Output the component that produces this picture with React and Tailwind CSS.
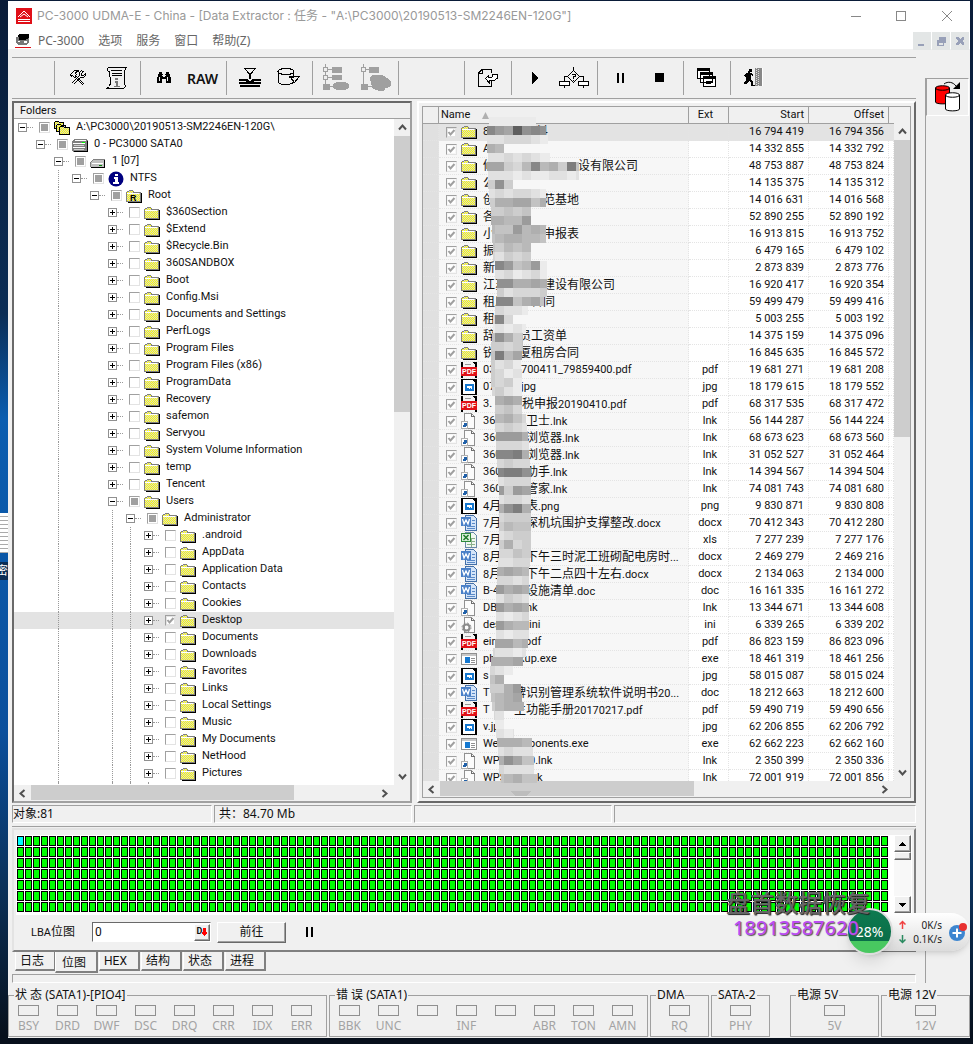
import { useState } from "react";

const TREE = [
  { level: 0, name: "A:\\PC3000\\20190513-SM2246EN-120G\\", icon: "stack", open: true, state: "some" },
  { level: 1, name: "0 - PC3000 SATA0", icon: "drive", open: true, state: "some" },
  { level: 2, name: "1 [07]", icon: "disk", open: true, state: "some" },
  { level: 3, name: "NTFS", icon: "info", open: true, state: "some" },
  { level: 4, name: "Root", icon: "root", open: true, state: "some" },
  ...[
    "$360Section", "$Extend", "$Recycle.Bin", "360SANDBOX", "Boot", "Config.Msi",
    "Documents and Settings", "PerfLogs", "Program Files", "Program Files (x86)",
    "ProgramData", "Recovery", "safemon", "Servyou", "System Volume Information",
    "temp", "Tencent",
  ].map((name) => ({ level: 5, name, icon: "folder" })),
  { level: 5, name: "Users", icon: "folder", open: true, state: "some" },
  { level: 6, name: "Administrator", icon: "folder", open: true, state: "some" },
  ...[
    ".android", "AppData", "Application Data", "Contacts", "Cookies", "Desktop",
    "Documents", "Downloads", "Favorites", "Links", "Local Settings", "Music",
    "My Documents", "NetHood", "Pictures",
  ].map((name) => ({ level: 7, name, icon: "folder", state: name === "Desktop" ? "all" : "none" })),
];

// head, width taken by head and the hidden part, tail, extension, start sector, icon
const FILES = [
  ["8", 53, "料", "", 16794419, "folder"],
  ["A", 0, "", "", 14332855, "folder"],
  ["修", 95, "设有限公司", "", 48753887, "folder"],
  ["公", 0, "", "", 14135375, "folder"],
  ["创", 60, "范基地", "", 14016631, "folder"],
  ["各", 0, "", "", 52890255, "folder"],
  ["小", 60, "申报表", "", 16913815, "folder"],
  ["振", 0, "", "", 6479165, "folder"],
  ["新建", 0, "", "", 2873839, "folder"],
  ["江苏", 60, "建设有限公司", "", 16920417, "folder"],
  ["租房", 48, "合同", "", 59499479, "folder"],
  ["租", 0, "", "", 5003255, "folder"],
  ["辞", 36, "员工资单", "", 14375159, "folder"],
  ["锐", 36, "厦租房合同", "", 16845635, "folder"],
  ["03", 38, "700411_79859400.pdf", "pdf", 19681271, "pdf"],
  ["07", 38, "jpg", "jpg", 18179615, "image"],
  ["3.", 39, "税申报20190410.pdf", "pdf", 68317535, "pdf"],
  ["360", 43, "卫士.lnk", "lnk", 56144287, "link"],
  ["360", 43, "浏览器.lnk", "lnk", 68673623, "link"],
  ["360", 43, "浏览器.lnk", "lnk", 31052527, "link"],
  ["360", 43, "助手.lnk", "lnk", 14394567, "link"],
  ["360", 43, "管家.lnk", "lnk", 74081743, "link"],
  ["4月", 43, "表.png", "png", 9830871, "image"],
  ["7月", 43, "深机坑围护支撑整改.docx", "docx", 70412343, "word"],
  ["7月", 0, "", "xls", 7277239, "excel"],
  ["8月", 43, "下午三时泥工班砌配电房时...", "docx", 2469279, "word"],
  ["8月", 43, "下午二点四十左右.docx", "docx", 2134063, "word"],
  ["B-4", 43, "设施清单.doc", "doc", 16161335, "word"],
  ["DB", 43, "nk", "lnk", 13344671, "link"],
  ["des", 46, "ini", "ini", 6339265, "gear"],
  ["ein", 42, "pdf", "pdf", 86823159, "pdf"],
  ["ph", 36, "kup.exe", "exe", 18461319, "exe"],
  ["s", 0, "", "jpg", 58015087, "image"],
  ["T", 31, "牌识别管理系统软件说明书20...", "doc", 18212663, "word"],
  ["T", 31, "主功能手册20170217.pdf", "pdf", 59490719, "pdf"],
  ["v.jp", 0, "", "jpg", 62206855, "image"],
  ["Web", 46, "ponents.exe", "exe", 62662223, "exe"],
  ["WPS", 46, "0.lnk", "lnk", 2350399, "link"],
  ["WPS", 54, "k", "lnk", 72001919, "link"],
];

// left edge, right edge, one hex shade for each 9px block
const MASK = [
  [3, 50, "eeeeeee"], [1, 60, "4670545"], [1, 62, "ddcccde"], [1, 18, "89"],
  [2, 64, "ddcdcdee"], [1, 93, "77bc9498b3a"], [2, 93, "dddedeedded"], [2, 27, "b5b"],
  [3, 60, "dcdccde"], [4, 60, "b8877a8"], [5, 45, "bbaba"], [5, 45, "88996"],
  [6, 60, "9aa6989"], [6, 60, "a98899a"], [7, 45, "ab9a9"], [7, 45, "cdbcb"],
  [9, 61, "c46a96e"], [9, 61, "cdcedce"], [11, 61, "a5588785"], [11, 61, "cbdcccb"],
  [10, 58, "744a87a"], [9, 42, "dcdde"], [7, 27, "c4c"], [7, 40, "edede"],
  [6, 37, "a58ba"], [5, 37, "bbcba"], [5, 36, "a397"], [5, 35, "bdce"],
  [5, 36, "bced"], [5, 36, "bcbe"], [6, 37, "cbde"], [9, 38, "8878"],
  [9, 38, "abac"], [9, 40, "a98ac"], [9, 41, "bcbcd"], [10, 42, "76668"],
  [10, 43, "bcccd"], [10, 43, "644387"], [11, 44, "bcbcc"], [12, 45, "54335"],
  [12, 45, "cdccc"], [13, 45, "66b67"], [13, 45, "bdccd"], [13, 45, "68538"],
  [13, 45, "bcbbb"], [13, 45, "ab9aa"], [13, 45, "bdcbb"], [13, 45, "bb8cb"],
  [13, 45, "cccab"], [12, 44, "cddcc"], [11, 43, "88789"], [11, 43, "bccdc"],
  [10, 43, "668788"], [10, 43, "cdbcd"], [10, 43, "668788"], [10, 43, "bdedc"],
  [10, 43, "768996"], [10, 43, "bdedd"], [9, 42, "87798"], [7, 40, "cdded"],
  [5, 37, "88877"], [4, 27, "cde"], [4, 20, "a8"], [4, 35, "bb86"],
  [5, 36, "a9877"], [6, 38, "b9888"], [8, 22, "cd"], [9, 22, "de"],
  [10, 28, "cded"], [11, 46, "988899"], [12, 47, "bdcddd"], [13, 48, "a857aa"],
  [13, 48, "bcdddd"], [15, 51, "aa98aa"],
];

const CJK = /([\u3000-\u9fff\uff00-\uffef]+)/;

function Text({ children }) {
  return children.split(CJK).map((part, i) =>
    i % 2 ? <span key={i} className="text-[12px]">{part}</span> : part
  );
}

function formatNumber(n) {
  return String(n).replace(/\B(?=(\d{3})+$)/g, " ");
}

function Svg({ w = 16, h = 16, children }) {
  return (
    <svg width={w} height={h} viewBox={`0 0 ${w} ${h}`} className="block shrink-0" shapeRendering="crispEdges" aria-hidden="true">
      {children}
    </svg>
  );
}

function FolderShape() {
  return (
    <>
      <path d="M1 14h14V5h1v10H2v-1z" />
      <path d="M.5 13.5v-9l1-1h1l1-1h3l1 1v1h7v9z" fill="url(#dither)" stroke="#808080" />
      <path d="M1 5.5h12" stroke="#fff" />
    </>
  );
}

function ItemIcon({ name }) {
  switch (name) {
    case "folder":
      return <Svg><FolderShape /></Svg>;
    case "root":
      return (
        <Svg>
          <FolderShape />
          <text x="4" y="13" fontSize="9" fontWeight="bold" fontFamily="Liberation Sans, sans-serif">R</text>
        </Svg>
      );
    case "stack":
      return (
        <Svg>
          <path d="M.5 8.500v-6l1-1h3l1 1h4v7z" fill="url(#dither)" stroke="#000" />
          <path d="M2.500 11.500v-6l1-1h3l1 1h4v7z" fill="url(#dither)" stroke="#000" />
          <path d="M5.500 14.500v-7l1-1h3l1 1h5v7z" fill="url(#dither)" stroke="#000" />
        </Svg>
      );
    case "drive":
      return (
        <Svg>
          <path d="M2 2h12l2 2v9l-2 2H1l-1-2V4z" fill="#808080" />
          <path d="M3 3h11M1 6h12M1 10h12" stroke="#fff" />
          <path d="M2 8h10M2 12h10" stroke="#d0d0d0" />
          <path d="M15 4v10H2" fill="none" stroke="#000" />
          <path d="M10 5h3v1h-3z" fill="#00ff00" />
        </Svg>
      );
    case "disk":
      return (
        <Svg>
          <path d="M3 5h11l1 2v6H1V8z" fill="#c0c0c0" />
          <path d="M.5 12.500v-4l3-3h11" fill="none" stroke="#808080" />
          <path d="M2 9.500h11" stroke="#fff" />
          <path d="M1 13.500h13.500V6" fill="none" stroke="#000" />
          <path d="M9 11h3v1H9z" fill="#008000" />
        </Svg>
      );
    case "info":
      return (
        <Svg>
          <circle cx="8" cy="8" r="7.500" fill="#000080" shapeRendering="auto" />
          <path d="M7 3h3v2H7zM6 6h4v5h1v2H5v-2h2V8H6z" fill="#fff" />
        </Svg>
      );
    case "pdf":
      return (
        <Svg>
          <path d="M0 0h16v16H0z" />
          <path d="M2 0h10l2 3v13H2z" fill="#f4f4f4" />
          <path d="M4 2h6" stroke="#999" />
          <path d="M0 5h16v9H0z" fill="#e01018" />
          <text x="1" y="12" fontSize="7" fontWeight="bold" fill="#fff" fontFamily="Liberation Sans, sans-serif">PDF</text>
        </Svg>
      );
    case "image":
      return (
        <Svg>
          <path d="M0 0h16v16H0z" />
          <path d="M2 1h10l2 3v11H2z" fill="#fff" />
          <path d="M4 5h9v7H4z" fill="#1578d0" />
          <path d="M6 7h5v3h-1V9H9v1H8V9H6z" fill="#fff" />
        </Svg>
      );
    case "link":
      return (
        <Svg>
          <path d="M3.500.5h7l3 3v12h-10z" fill="#fbfbfb" stroke="#909090" />
          <path d="M10.500.5v3h3" fill="none" stroke="#707070" />
          <path d="M.5 8.500h6v7h-6z" fill="#fff" stroke="#b0b0b0" />
          <path d="M2 14v-2l1-1-1-1h4v4l-1-1-1 1z" fill="#2060a8" />
        </Svg>
      );
    case "word":
      return (
        <Svg>
          <path d="M4.500.5h8l3 3v12h-11z" fill="#d4e4f8" stroke="#4470a8" />
          <path d="M6 11.500h8M6 13.500h8M11 5.500h3M11 8.500h3" stroke="#5a8ac8" />
          <path d="M0 2h10v9H0z" fill="#4a80c8" />
          <path d="M1.500 4l1.500 5 2-4 2 4 1.500-5" fill="none" stroke="#fff" strokeWidth="1.300" shapeRendering="auto" />
        </Svg>
      );
    case "excel":
      return (
        <Svg>
          <path d="M4.500.5h8l3 3v12h-11z" fill="#f0f8f0" stroke="#6888a8" />
          <path d="M6 12.500h8M11 6.500h3M11 9.500h3M10.500 6v9" stroke="#8ab08a" />
          <path d="M.5 1.500h9v8h-9z" fill="#d8f0d8" stroke="#2f8a3a" />
          <path d="M2.500 3l5 5M7.500 3l-5 5" stroke="#1f7a2a" strokeWidth="1.500" shapeRendering="auto" />
        </Svg>
      );
    case "gear":
      return (
        <Svg>
          <path d="M3.500.5h7l3 3v12h-10z" fill="#fbfbfb" stroke="#909090" />
          <path d="M10.500.5v3h3" fill="none" stroke="#707070" />
          <circle cx="5.500" cy="10.500" r="3" fill="none" stroke="#8a8a8a" strokeWidth="2" shapeRendering="auto" />
          <circle cx="5.500" cy="10.500" r="4.500" fill="none" stroke="#8a8a8a" strokeDasharray="1.800 1.730" shapeRendering="auto" />
        </Svg>
      );
    default:
      return (
        <Svg>
          <path d="M.5 2.500h15v11H.5z" fill="#fff" stroke="#909090" />
          <path d="M1 3h14v2H1z" fill="#c8c8c8" />
          <path d="M4 6h5v6H4z" fill="#1578d0" />
          <path d="M10 7.500h4M10 9.500h4M10 11.500h4" stroke="#909090" />
        </Svg>
      );
  }
}

function CheckBox({ label, state = "none" }) {
  const [checked, setChecked] = useState(state === "all");
  return (
    <span className="relative block h-[11px] w-[11px] shrink-0">
      <input
        type="checkbox"
        aria-label={label}
        checked={checked}
        onChange={() => setChecked(!checked)}
        className={
          "block h-[11px] w-[11px] appearance-none border border-[#e3e3e3] border-t-[#a0a0a0] border-l-[#a0a0a0] bg-clip-content p-px " +
          (state === "some" ? "bg-[#a0a0a0]" : "bg-white")
        }
      />
      {checked && (
        <svg width="11" height="11" viewBox="0 0 11 11" className="pointer-events-none absolute inset-0">
          <path d="M2.500 5l2 2.500 4-4.500" fill="none" stroke="#a0a0a0" strokeWidth="2" />
        </svg>
      )}
    </span>
  );
}

const GUIDES = [2, 5, 6, 7];

function TreeRow({ node, selected, onSelect }) {
  const { level, name, icon, open, state } = node;
  return (
    <li className={"flex h-[17px] items-center pr-2 " + (selected ? "bg-[#e3e3e3]" : "")} onClick={onSelect}>
      {Array.from({ length: level }, (_, i) => (
        <span key={i} className="flex h-full w-[18px] shrink-0 pl-2">
          {GUIDES.includes(i) && <span className="h-full border-l border-dotted border-[#999]" />}
        </span>
      ))}
      <span className="flex h-full w-[25px] shrink-0 items-center pl-1">
        <button aria-label={(open ? "Collapse " : "Expand ") + name} className="block bg-white">
          <Svg w={9} h={9}>
            <path d="M.5.5h8v8h-8z" fill="#fff" stroke="#909090" />
            <path d={open ? "M2 4.500h5" : "M2 4.500h5M4.500 2v5"} stroke="#000" />
          </Svg>
        </button>
        <span className="w-[6px] border-t border-dotted border-[#999]" />
      </span>
      <CheckBox label={name} state={state} />
      <span className="ml-1"><ItemIcon name={icon} /></span>
      <span className="ml-[6px] whitespace-pre">{name}</span>
    </li>
  );
}

function Chevron({ d }) {
  return (
    <svg width="9" height="9" viewBox="0 0 9 9" aria-hidden="true">
      <path d={d} fill="none" stroke="#505050" strokeWidth="2" />
    </svg>
  );
}

function VScroll({ thumb }) {
  return (
    <div className="flex w-4 shrink-0 flex-col bg-[#f0f0f0]">
      <button aria-label="Scroll up" className="flex h-[17px] items-center justify-center"><Chevron d="M1 6.500l3.500-4 3.500 4" /></button>
      <div className="flex-1"><div className={"bg-[#cdcdcd] " + thumb} /></div>
      <button aria-label="Scroll down" className="flex h-[17px] items-center justify-center"><Chevron d="M1 2.500l3.500 4 3.500-4" /></button>
    </div>
  );
}

function HScroll({ thumb }) {
  return (
    <div className="mr-[17px] flex h-4 shrink-0 bg-[#f0f0f0]">
      <button aria-label="Scroll left" className="flex w-[17px] items-center justify-center"><Chevron d="M6.500 1l-4 3.500 4 3.500" /></button>
      <div className="flex-1"><div className={"h-[15px] bg-[#cdcdcd] " + thumb} /></div>
      <button aria-label="Scroll right" className="flex w-[17px] items-center justify-center"><Chevron d="M2.500 1l4 3.500-4 3.500" /></button>
    </div>
  );
}

function Folders() {
  const [selected, setSelected] = useState("Desktop");
  return (
    <section className="flex w-[400px] shrink-0 flex-col border-2 border-[#a0a0a0] border-t-[#696969] border-l-[#696969] bg-[#f0f0f0]">
      <h2 className="h-4 border-b border-[#a0a0a0] pl-[6px] leading-4">Folders</h2>
      <div className="flex h-[666px] bg-white">
        <ul className="min-w-0 flex-1 overflow-hidden">
          {TREE.map((node) => (
            <TreeRow key={node.level + node.name} node={node} selected={selected === node.name} onSelect={() => setSelected(node.name)} />
          ))}
          <li className="flex h-1">
            <span className="ml-[44px] border-l border-dotted border-[#999]" />
            <span className="ml-[53px] border-l border-dotted border-[#999]" />
            <span className="ml-[17px] border-l border-dotted border-[#999]" />
            <span className="ml-[17px] border-l border-dotted border-[#999]" />
          </li>
        </ul>
        <VScroll thumb="h-[276px]" />
      </div>
      <HScroll thumb="w-[263px]" />
    </section>
  );
}

function Mask() {
  return (
    <svg width="96" height="684" viewBox="0 0 96 684" className="pointer-events-none absolute top-[10px] left-[63px]" shapeRendering="crispEdges" aria-hidden="true">
      {MASK.map(([left, right, shades], row) =>
        shades.split("").map((s, col) => {
          const x = Math.max(left, col * 9);
          const end = Math.min(right, col * 9 + 9);
          const v = 95 + parseInt(s, 16) * 10;
          return end > x ? (
            <rect key={row + "-" + col} x={x} y={row * 9} width={end - x} height="9" fill={`rgb(${v},${v},${v})`} />
          ) : null;
        })
      )}
      <path d="M24 674h22l-6 5H30z" fill="#bdbdbd" />
    </svg>
  );
}

function FileList() {
  const th = "border-r border-b border-[#a0a0a0] p-0 font-normal";
  const td = "border-r border-b border-dotted border-[#e4e4e4] p-0";
  return (
    <section className="min-w-0 flex-1 border-2 border-white border-r-[#696969] border-b-[#696969] p-[3px]">
      <div className="relative border border-[#a0a0a0]">
        <div className="flex h-[674px]">
          <div className="min-w-0 flex-1 overflow-hidden bg-white">
            <table className="w-full table-fixed border-separate border-spacing-0">
              <colgroup>
                <col className="w-4" />
                <col />
                <col className="w-[40px]" />
                <col className="w-[80px]" />
                <col className="w-[80px]" />
                <col className="w-[5px]" />
              </colgroup>
              <thead>
                <tr className="h-4 bg-[#f0f0f0] leading-4">
                  <th className={th} />
                  <th className={th + " pl-[2px] text-left"}>
                    <span className="flex items-center gap-3">
                      Name
                      <Svg w={7} h={7}><path d="M3.500 0L7 7H0z" fill="#b0b0b0" shapeRendering="auto" /></Svg>
                    </span>
                  </th>
                  <th className={th + " pr-[6px] text-center"}>Ext</th>
                  <th className={th + " pr-[4px] text-right"}>Start</th>
                  <th className={th + " pr-[4px] text-right"}>Offset</th>
                  <th className="border-b border-[#a0a0a0]" />
                </tr>
              </thead>
              <tbody>
                {FILES.map(([head, gap, tail, ext, start, icon], i) => (
                  <tr key={start} className={"h-[17px] leading-4 " + (i === 0 ? "bg-[#e3e3e3]" : "")}>
                    <td className={td + " bg-[#e0e0e0]"} />
                    <td className={td + (i === 0 ? "" : " bg-[#f7f7f7]")}>
                      <span className="flex h-4 items-center overflow-hidden pl-[7px] whitespace-nowrap">
                        <CheckBox label={head + tail} state="all" />
                        <span className="ml-1"><ItemIcon name={icon} /></span>
                        <span className="ml-[6px] shrink-0" style={{ width: gap || undefined }}><Text>{head}</Text></span>
                        <span><Text>{tail}</Text></span>
                      </span>
                    </td>
                    <td className={td + " pl-[3px] text-center"}>{ext}</td>
                    <td className={td + " pr-1 text-right"}>{formatNumber(start)}</td>
                    <td className={td + " pr-1 text-right"}>{formatNumber(start - 63)}</td>
                    <td className={td} />
                  </tr>
                ))}
              </tbody>
            </table>
          </div>
          <div className="flex bg-[#f0f0f0] pt-4"><VScroll thumb="h-[297px]" /></div>
        </div>
        <HScroll thumb="w-[254px]" />
        <Mask />
      </div>
    </section>
  );
}

const TOOLS = {
  tools: [18, 18, <g key="t" fill="none" stroke="#000"><path d="M2.500 14.500l8-8M4.500 15.500l7-7M10.500 6.500v-3l2-2M11.500 8.500h3l2-2v-2l-2 2h-2v-2l2-2h-2" /><path d="M7.500 7.500l8 8M6.500 8.500l8 8M1.500 5.500l4-4h4v1h-2l-1 2 1 1-2 3-2-2-1 1z" /></g>],
  script: [24, 24, <g key="s" fill="none" stroke="#000"><path d="M4.500 1.500h17l-2 3v12l1 5M4.500 1.500c-3 0-3 4 0 4l1 11-1 4-3 2h16c3 0 3-3 3-4" /><path d="M6 4.500h11M7 7.500h10M7 9.500h10" /><path d="M10 12h3v2h-3zM10 15h3v5h2v1H9v-1h2v-3h-1z" fill="#777" stroke="none" /></g>],
  find: [18, 18, <g key="f"><path d="M4 3h3v2h1v3h2V5h1V3h3v2h1v3h1v6h-5v-4H7v4H2V8h1V5h1z" /><path d="M4.500 8v4M12.500 8v4M7 6.500h4" stroke="#eee" /></g>],
  merge: [24, 22, <g key="m"><path d="M6.500 1.500h11l-5.500 6z" fill="none" stroke="#000" /><path d="M1 12h8l3 2 3-2h8v2h-7v1h7v2H1v-2h7v-1H1zM2 18h20v2H2zM11 8h2v4h-2z" /></g>],
  save: [24, 22, <g key="v" fill="none" stroke="#000"><ellipse cx="9" cy="4.500" rx="8" ry="3" /><path d="M1.500 4v11c0 3 12 4 15 0M16.500 5v4M16.500 10.500h-4v-1h10l-5 6-4-5z" /></g>],
  map1: [28, 28, <g key="a" fill="#a0a0a0" stroke="#a0a0a0"><path d="M3.500 0v20M6 5.500h5M6 13.500h5M5 22.500h7" /><path d="M1.500 3.500h4v4h-4zM1.500 11.500h4v4h-4z" fill="#eee" /><path d="M10 3h9v5h-9zM10 11h9v4h-9zM1 20h6v5H1z" /><ellipse cx="19" cy="22" rx="8" ry="4" /></g>],
  map2: [32, 28, <g key="b" fill="#a0a0a0" stroke="#a0a0a0"><path d="M4.500 0v20M6 5.500h6M5 22.500h9" /><path d="M2.500 3.500h4v4h-4z" fill="#eee" /><path d="M10 3h9v5h-9zM2 20h6v5H2zM11 14l4-3h8l4 3 4 3v5l-5 2-2 3-5-1-5-2z" /></g>],
  export: [22, 22, <g key="e" fill="none" stroke="#000"><path d="M14.500 14v5.500h-13V6l3.500-3.500h9.500V6M1.500 6.500H5V3" /><path d="M8.500 11.500l3-3v2c3 1 5-1 4-3h4.500v4c-2 2-5 3-8 2v2z" fill="#fff" /></g>],
  play: [10, 12, <path key="p" d="M2 0l6 6-6 6z" />],
  flow: [32, 24, <g key="w" fill="none" stroke="#000"><path d="M15.500 1v4M15.500 4.500l6 6-6 6-6-6zM9 10.500H6.500v5M22 10.500h3v5M6.500 20v2M25.500 20v2" /><path d="M1.500 15.500h10v4h-10zM20.500 15.500h10v4h-10z" fill="#fff" /><path d="M14 8.500h3v2h-1.500v2M15.500 13.500v1" /></g>],
  pause: [8, 12, <path key="u" d="M0 1h2v10H0zM5 1h2v10H5z" />],
  stop: [10, 10, <path key="o" d="M0 0h9v9H0z" />],
  windows: [20, 22, <g key="n" stroke="#000" fill="#fff"><path d="M.5 1.500h12v10H.5zM3.500 5.500h12v10h-12zM6.500 9.500h12v10h-12z" /><path d="M1 2.500h12M4 6.500h12M7 10.500h12" strokeWidth="2" /><path d="M9 14.500h7M9 16.500h5" /></g>],
  exit: [22, 20, <g key="x"><path d="M6 1h3v3H7v1l3 1v2l-2-1v4l2 3v3h2v1H8v-3l-2-2-1 2-3 1H1v-2l2-1V9H2L1 8l2-3h2z" /><path d="M12 0h7v18h-7z" fill="#888" /><path d="M13.500 0v18M15.500 1v17" stroke="#ddd" strokeDasharray="1 1" /><path d="M19.500 0v18" stroke="#fff" /></g>],
};

const TOOL_GROUPS = [
  ["w-[42px]", []],
  ["w-[86px]", ["tools", "script"]],
  ["w-[86px]", ["find", "RAW"]],
  ["w-[86px]", ["merge", "save"]],
  ["w-[86px]", ["map1", "map2"]],
  ["w-[66px]", []],
  ["w-[47px]", ["export"]],
  ["w-[86px]", ["play", "flow"]],
  ["w-[86px]", ["pause", "stop"]],
  ["w-[47px]", ["windows"]],
  ["w-[60px]", ["exit"]],
];

function ToolBar() {
  return (
    <div className="flex h-[42px] border-y border-[#a0a0a0] py-[3px]">
      {TOOL_GROUPS.map(([width, names], i) => (
        <div key={i} className={"flex shrink-0 pl-[3px] " + width + (i ? " border-l border-[#a0a0a0]" : "")}>
          {names.map((name) => (
            <button key={name} aria-label={name} className="flex w-[39px] items-center justify-center">
              {name === "RAW" ? (
                <span className="font-['Noto_Sans',sans-serif] text-[14px] font-semibold">RAW</span>
              ) : (
                <Svg w={TOOLS[name][0]} h={TOOLS[name][1]}>{TOOLS[name][2]}</Svg>
              )}
            </button>
          ))}
        </div>
      ))}
    </div>
  );
}

function StatusBar() {
  const cell = "border border-white border-t-[#a0a0a0] border-l-[#a0a0a0]";
  return (
    <div className="mt-[2px] flex h-[18px] gap-[2px] font-['Noto_Sans','Noto_Sans_CJK_SC',sans-serif] text-[12px] leading-4">
      <div className={cell + " w-[200px]"}>对象:81</div>
      <div className={cell + " w-[198px] pl-1 whitespace-pre"}>共：84.70 Mb</div>
      <div className={cell + " w-[198px]"} />
      <div className={cell + " flex-1"} />
    </div>
  );
}

const raised = "border border-white border-r-[#696969] border-b-[#696969] bg-[#f0f0f0] shadow-[inset_-1px_-1px_#a0a0a0]";

function BitmapPanel() {
  const [lba, setLba] = useState("0");
  return (
    <section className="relative mt-[3px] border-t border-[#a0a0a0] pt-px">
      <div className="border-2 border-[#e3e3e3] border-r-[#808080] border-b-[#808080] px-[2px] py-[5px]">
        <div className="flex h-[80px] bg-white">
          <div className="grid h-[77px] min-w-0 flex-1 auto-rows-[10px] grid-cols-[repeat(auto-fill,7px)] content-start gap-px overflow-hidden pt-px pl-px">
            {Array.from({ length: 763 }, (_, i) => (
              <span key={i} className={"border border-black " + (i ? "bg-[#00ff00]" : "bg-[#00ffff]")} />
            ))}
          </div>
          <div className="mr-px flex h-[78px] w-[17px] shrink-0 flex-col bg-[#f8f8f8]">
            <button aria-label="Up" className={"flex h-[17px] items-center justify-center " + raised}><Svg w={7} h={4}><path d="M3 0h1l3 4H0z" /></Svg></button>
            <div className={"h-2 " + raised} />
            <div className="flex-1" />
            <button aria-label="Down" className={"flex h-[17px] items-center justify-center " + raised}><Svg w={7} h={4}><path d="M0 0h7L4 4H3z" /></Svg></button>
          </div>
        </div>
        <form className="flex h-[30px] items-center pt-1 pl-[15px]" onSubmit={(e) => e.preventDefault()}>
          <label htmlFor="lba" className="w-[61px]"><Text>LBA位图</Text></label>
          <span className="flex h-5 w-[119px] items-center border border-white border-t-[#696969] border-l-[#696969] bg-white">
            <input id="lba" value={lba} onChange={(e) => setLba(e.target.value)} className="w-full min-w-0 px-[2px] text-[12px] outline-none" />
            <button type="button" aria-label="Decimal" className={"flex h-[17px] w-4 shrink-0 items-center justify-center text-[9px] font-bold " + raised}>
              D
              <Svg w={5} h={8}><path d="M1 0h3v4h1v2H4L3 8H2L1 6H0V4h1z" fill="#ff0000" /></Svg>
            </button>
          </span>
          <button type="submit" className={"ml-[6px] h-[21px] w-[69px] text-[12px] leading-4 " + raised}>前往</button>
          <button type="button" aria-label="Pause" className="ml-5"><Svg w={8} h={12}><path d="M0 1h2v10H0zM5 1h2v10H5z" /></Svg></button>
        </form>
      </div>
      <SpeedWidget />
    </section>
  );
}

function SpeedWidget() {
  return (
    <div className="absolute -right-[54px] bottom-0 h-[64px] w-[244px]">
      <div className="absolute top-[25px] right-0 flex h-[38px] w-[102px] items-center rounded-r-full bg-gradient-to-b from-white to-[#dcdcdc] pl-[31px] font-['Noto_Sans',sans-serif] text-[10px] text-[#222] shadow-md">
        <div className="w-3">
          <svg width="7" height="24" viewBox="0 0 7 24" fill="none" strokeWidth="1.500" aria-hidden="true">
            <path d="M3.500 9V2M.5 4.500l3-3 3 3" stroke="#f04040" />
            <path d="M3.500 15v7M.5 19.500l3 3 3-3" stroke="#2a8a60" />
          </svg>
        </div>
        <div className="flex w-8 flex-col items-end leading-[14px] whitespace-nowrap">
          <p>0K/s</p>
          <p>0.1K/s</p>
        </div>
        <svg width="24" height="24" viewBox="0 0 24 24" className="ml-1 shrink-0" aria-hidden="true">
          <circle cx="11" cy="13" r="8" fill="#3d86d0" />
          <path d="M11 8.500v9M6.500 13h9" stroke="#fff" strokeWidth="2" />
          <circle cx="17" cy="7" r="4" fill="#e83030" />
        </svg>
      </div>
      <div className="absolute top-[20px] left-[120px] flex h-[47px] w-[47px] items-center justify-center rounded-full border-2 border-[#ddd] bg-[linear-gradient(#0e7a50_0%,#0a6e48_72%,#48c860_72%)] font-['Noto_Sans',sans-serif] text-[14px] text-white shadow-lg">
        28%
      </div>
      <div className="absolute top-0 left-0 font-['Noto_Sans_CJK_SC',sans-serif] text-[24px] leading-7 font-medium whitespace-nowrap text-[#666] [text-shadow:1px_1px_1px_#222]">盘首数据恢复</div>
      <div className="absolute top-[26px] left-[7px] font-['Noto_Sans',sans-serif] text-[20px] leading-7 font-medium text-[#bb4cf2] [text-shadow:1px_1px_1px_#555]">18913587620</div>
    </div>
  );
}

function Tabs() {
  const [active, setActive] = useState("位图");
  return (
    <div role="tablist" className="flex h-[22px] items-start gap-px pl-[3px] text-[12px] leading-4">
      {["日志", "位图", "HEX", "结构", "状态", "进程"].map((name) => (
        <button
          key={name}
          role="tab"
          aria-selected={active === name}
          onClick={() => setActive(name)}
          className={
            "border-r-2 border-b-2 border-l border-[#808080] border-l-white bg-[#f0f0f0] pl-1 text-left " +
            (active === name ? "-ml-[2px] h-[21px] w-[43px] pt-[3px] pl-[6px]" : "h-[19px] w-[41px]")
          }
        >
          {name}
        </button>
      ))}
    </div>
  );
}

function LampGroup({ title, lamps, className }) {
  return (
    <fieldset className={"h-[49px] border border-[#a0a0a0] " + className}>
      <legend className="ml-[5px] px-px leading-[14px] whitespace-pre">{title}</legend>
      <div className={"flex " + (lamps.length > 1 ? "" : "justify-center")}>
        {lamps.map((lamp, i) => (
          <div key={i} className="flex w-[39px] flex-col items-center pt-[3px]">
            <span className="h-[11px] w-[21px] border border-[#909090]" />
            <span className="h-4 pt-[2px] leading-4 text-[#a3a3a3]">{lamp}</span>
          </div>
        ))}
      </div>
    </fieldset>
  );
}

export default function App() {
  return (
    <div className="relative bg-[linear-gradient(#0a1c38_0%,#0b2d55_30%,#0a5db0_40%,#0a4f9c_70%,#0b3058_85%,#07101c_99%)] pt-px pr-[3px] pb-2 pl-2 font-[Roboto,'Noto_Sans_CJK_SC',sans-serif] text-[11px] text-[#111]">
      <div className="absolute top-[513px] left-0 h-10 w-2 bg-[repeating-linear-gradient(#fff_0_3px,#aaa_3px_4px)]" />
      <div className="absolute top-[562px] left-0 flex w-2 justify-end overflow-hidden bg-[#0b2d55] text-[12px] text-white">密</div>
      <svg width="0" height="0" className="absolute" aria-hidden="true">
        <defs>
          <pattern id="dither" width="2" height="2" patternUnits="userSpaceOnUse">
            <path d="M0 0h2v2H0z" fill="#ffff00" />
            <path d="M0 0h1v1H0zM1 1h1v1H1z" fill="#d4d4d4" />
          </pattern>
        </defs>
      </svg>

      <div className="bg-[#f0f0f0]">
        <header className="bg-white font-['Noto_Sans','Noto_Sans_CJK_SC',sans-serif] text-[12px]">
          <div className="flex h-[30px] items-center pl-2">
            <Svg>
              <path d="M0 0h16v16H0z" fill="#e01018" />
              <path d="M2 9l6-6 6 6M4 9l4-3 4 3M2 11.500h12M2 13.500h12" fill="none" stroke="#fff" shapeRendering="auto" />
            </Svg>
            <h1 className="ml-[5px] flex-1 font-[Inter,'Noto_Sans_CJK_SC',sans-serif] text-[#999]">PC-3000 UDMA-E - China - [Data Extractor : 任务 - "A:\PC3000\20190513-SM2246EN-120G"]</h1>
            <button aria-label="Minimize" className="flex w-[45px] justify-center"><Svg w={10} h={10}><path d="M0 5.500h10" stroke="#888" /></Svg></button>
            <button aria-label="Maximize" className="flex w-[45px] justify-center"><Svg w={10} h={10}><path d="M.5.5h9v9h-9z" fill="none" stroke="#888" /></Svg></button>
            <button aria-label="Close" className="flex w-[47px] justify-center"><svg width="10" height="10"><path d="M0 0l10 10M10 0L0 10" stroke="#888" /></svg></button>
          </div>
          <div className="flex h-[18px] items-center pt-px pl-[7px]">
            <Svg>
              <path d="M3 2l2-1h9v4l-3 2H4z" />
              <path d="M1 4h3v3h6l4-2v4l-3 3H3L1 9z" fill="#777" />
              <path d="M3 8h2v1H3zM9 8h3v2H9z" fill="#fff" />
              <path d="M0 14.500h16" stroke="#e01018" />
            </Svg>
            <nav className="flex flex-1 gap-[14px] pl-[7px] text-[#666]">
              {["PC-3000", "选项", "服务", "窗口", "帮助(Z)"].map((item) => (
                <button key={item}>{item}</button>
              ))}
            </nav>
            <div className="flex gap-px pr-px">
              {["M5 11.500h6v2H5z", "M7 5h7v6h-2V8H7zM5 8h7v6H5zM6.500 10.500v2h4v-2z", "M5 5h2l2 2 2-2h2v2l-2 2 2 2v2h-2l-2-2-2 2H5v-2l2-2-2-2z"].map((d, i) => (
                <button key={i} aria-label={["Minimize child", "Restore child", "Close child"][i]} className="bg-[#e3e6e6]">
                  <Svg w={18} h={18}><path d={d} fill="#98a0b8" fillRule="evenodd" /></Svg>
                </button>
              ))}
            </div>
          </div>
        </header>

        <div className="flex pt-2">
          <main className="ml-1 min-w-0 flex-1">
            <ToolBar />
            <div className="mt-[2px] flex gap-[5px]">
              <Folders />
              <FileList />
            </div>
            <StatusBar />
            <BitmapPanel />
            <Tabs />
            <div className="h-[9px] border border-white border-t-[#a0a0a0] border-l-[#a0a0a0]" />
          </main>
          <aside className="mt-[21px] ml-[9px] w-[45px] border-l border-[#a0a0a0]">
            <button aria-label="Drives" className="flex h-[38px] w-[43px] items-center justify-center border border-white border-t-[#a0a0a0] border-l-[#a0a0a0]">
              <svg width="28" height="32" viewBox="0 0 28 32">
                <path d="M1.500 7v14c0 2.500 14 2.500 14 0V7c0-3-14-3-14 0z" fill="#ff0000" stroke="#000" />
                <path d="M1.500 7c0 3 14 3 14 0" fill="none" stroke="#000" />
                <path d="M11.500 14v14c0 2.500 14 2.500 14 0V14c0-3-14-3-14 0z" fill="#fff" stroke="#000" />
                <path d="M11.500 14c0 3 14 3 14 0M10 3c4-3 9-2 12 2" fill="none" stroke="#000" />
                <path d="M26 1v7h-7z" />
              </svg>
            </button>
          </aside>
        </div>

        <footer className="flex gap-[2px] pt-[5px] pb-px font-['Noto_Sans','Noto_Sans_CJK_SC',sans-serif] text-[12px]">
          <LampGroup title="状 态 (SATA1)-[PIO4]" lamps={["BSY", "DRD", "DWF", "DSC", "DRQ", "CRR", "IDX", "ERR"]} className="flex-[319]" />
          <LampGroup title="错 误 (SATA1)" lamps={["BBK", "UNC", "", "INF", "", "ABR", "TON", "AMN"]} className="flex-[319]" />
          <LampGroup title="DMA" lamps={["RQ"]} className="w-[59px]" />
          <LampGroup title="SATA-2" lamps={["PHY"]} className="w-[59px]" />
          <LampGroup title="电源 5V" lamps={["5V"]} className="ml-[18px] w-[89px]" />
          <LampGroup title="电源 12V" lamps={["12V"]} className="w-[89px]" />
        </footer>
      </div>
    </div>
  );
}
